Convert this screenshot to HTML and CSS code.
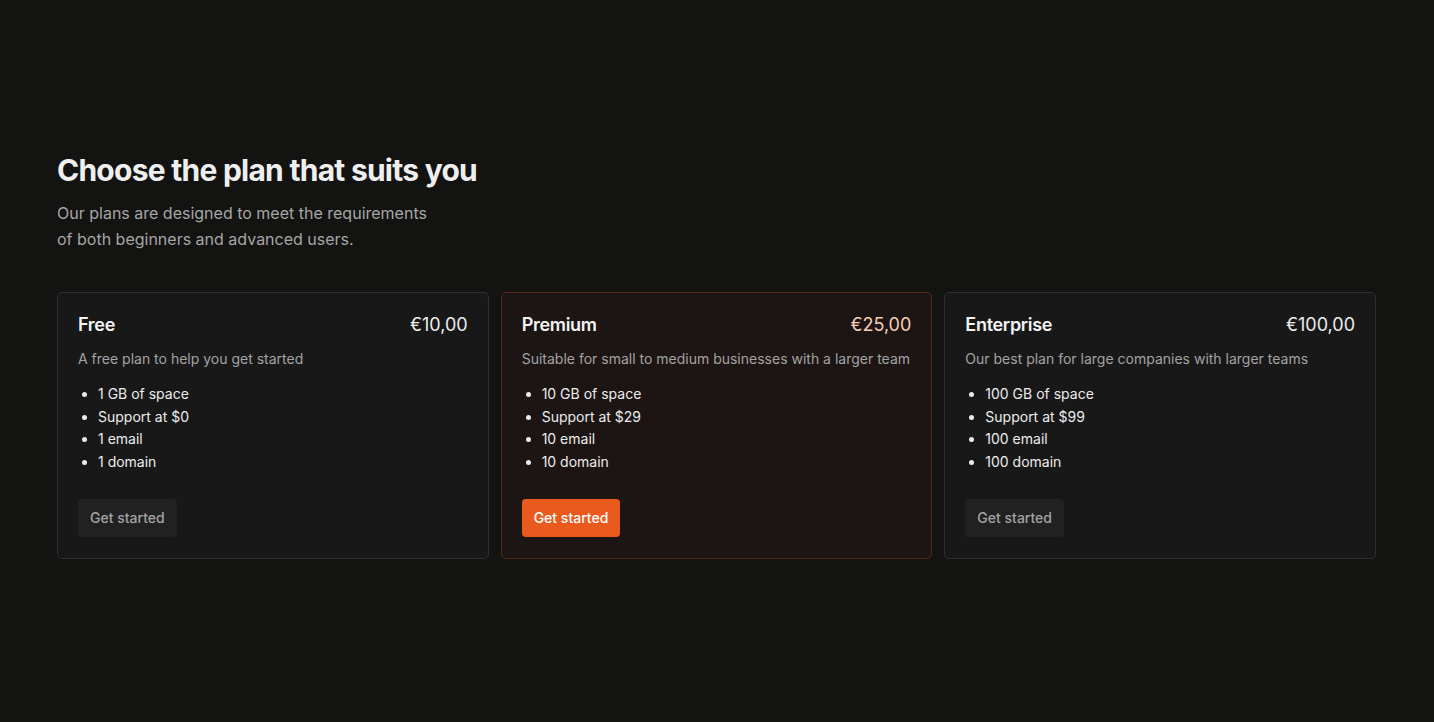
FILE: index.html
```html
<!DOCTYPE html>
<html lang="en">
<head>
<meta charset="utf-8">
<title>Pricing</title>
<link rel="stylesheet" href="styles.css">
</head>
<body>
<main class="pricing">
  <header class="intro">
    <h1 class="title">Choose the plan that suits you</h1>
    <p class="lead">Our plans are designed to meet the requirements of both beginners and advanced users.</p>
  </header>
  <section class="plans">
    <article class="plan">
      <div class="plan-head">
        <h2 class="plan-name">Free</h2>
        <span class="plan-price">€10,00</span>
      </div>
      <p class="plan-desc">A free plan to help you get started</p>
      <ul class="features">
        <li>1 GB of space</li>
        <li>Support at $0</li>
        <li>1 email</li>
        <li>1 domain</li>
      </ul>
      <button class="btn">Get started</button>
    </article>
    <article class="plan plan-featured">
      <div class="plan-head">
        <h2 class="plan-name">Premium</h2>
        <span class="plan-price">€25,00</span>
      </div>
      <p class="plan-desc">Suitable for small to medium businesses with a larger team</p>
      <ul class="features">
        <li>10 GB of space</li>
        <li>Support at $29</li>
        <li>10 email</li>
        <li>10 domain</li>
      </ul>
      <button class="btn btn-primary">Get started</button>
    </article>
    <article class="plan">
      <div class="plan-head">
        <h2 class="plan-name">Enterprise</h2>
        <span class="plan-price">€100,00</span>
      </div>
      <p class="plan-desc">Our best plan for large companies with larger teams</p>
      <ul class="features">
        <li>100 GB of space</li>
        <li>Support at $99</li>
        <li>100 email</li>
        <li>100 domain</li>
      </ul>
      <button class="btn">Get started</button>
    </article>
  </section>
</main>
</body>
</html>
```
FILE: styles.css
```css
* { box-sizing: border-box; }
html, body { margin: 0; padding: 0; }
body {
  background: #131312;
  color: #f2f2f2;
  font-family: Inter, "Noto Sans", sans-serif;
  min-height: 722px;
}
.pricing {
  padding: 150px 58px 0 57px;
}
.intro { margin-bottom: 40px; }
.title {
  margin: 0;
  font-size: 30px;
  line-height: 40px;
  font-weight: 700;
  letter-spacing: -0.75px;
  color: #efefef;
}
.lead {
  margin: 10px 0 0 0;
  max-width: 380px;
  font-size: 16px;
  line-height: 26px;
  color: #a6a6a6;
}
.plans {
  display: grid;
  grid-template-columns: repeat(3, 1fr);
  gap: 12px;
}
.plan {
  background: #181818;
  border: 1px solid #2f2f2f;
  border-radius: 5px;
  padding: 21px 20px 21px 20px;
  display: flex;
  flex-direction: column;
  align-items: flex-start;
}
.plan-featured {
  background: #1c1514;
  border-color: #542716;
}
.plan-head {
  width: 100%;
  display: flex;
  justify-content: space-between;
  align-items: center;
}
.plan-name {
  margin: 0;
  font-size: 18px;
  line-height: 22px;
  font-weight: 600;
  letter-spacing: -0.3px;
  color: #f3f3f3;
}
.plan-price {
  font-size: 18px;
  line-height: 22px;
  font-weight: 400;
  color: #ededed;
}
.plan-featured .plan-price { color: #f6cdb4; }
.plan-desc {
  margin: 13px 0 0 0;
  font-size: 14px;
  line-height: 20px;
  color: #a3a3a3;
}
.features {
  margin: 14px 0 0 0;
  padding-left: 20px;
  font-size: 14px;
  line-height: 22.7px;
  color: #ececec;
}
.btn {
  margin-top: 25px;
  height: 38px;
  padding: 0 12px;
  border: 0;
  border-radius: 4px;
  background: #212121;
  color: #a3a3a3;
  font-family: Inter, "Noto Sans", sans-serif;
  font-size: 14px;
  font-weight: 500;
  cursor: pointer;
}
.btn-primary {
  background: #ea5a1c;
  color: #ffffff;
}
```
